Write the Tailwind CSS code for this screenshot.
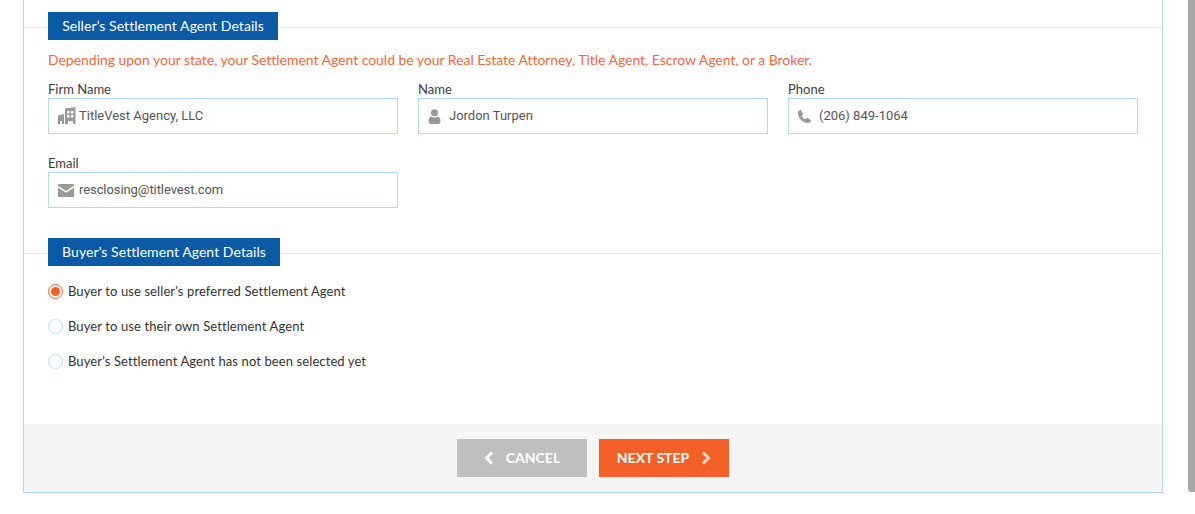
<!DOCTYPE html>
<html lang="en">
<head>
  <meta charset="UTF-8" />
  <title>Settlement Agent Details</title>
  <script src="https://cdn.jsdelivr.net/npm/@tailwindcss/browser@4"></script>
</head>
<body class="bg-white h-[514px] overflow-hidden font-['Lato',sans-serif] relative">

  <!-- scrollbar thumb -->
  <div class="absolute top-0 right-0 w-[7px] h-[492px] bg-[#a9a9a9] rounded-bl-[3px]"></div>

  <div class="ml-[23px] w-[1140px] h-[493px] border-x border-b border-[#b5d8ff] flex flex-col">

    <div class="flex-1 pt-[12px]">
      <!-- seller -->
      <div class="relative h-[28px]">
        <div class="absolute left-0 right-0 top-[15px] h-px bg-[#e6e8ea]"></div>
        <h2 class="absolute left-[24px] top-0 w-[230px] h-[28px] bg-[#0b5aa5] text-white text-[14px] leading-[28px] tracking-[0.06px] text-center">Seller’s Settlement Agent Details</h2>
      </div>

      <p class="ml-[24px] mt-[10px] text-[14px] leading-[20px] tracking-[-0.033px] text-[#f2683a]">Depending upon your state, your Settlement Agent could be your Real Estate Attorney, Title Agent, Escrow Agent, or a Broker.</p>

      <div class="ml-[24px] mt-[10px] grid grid-cols-[350px_350px_350px] gap-x-[20px] gap-y-[20px] w-[1090px]">
        <div>
          <label class="block text-[13px] leading-[18px] text-[#3c3c3c]">Firm Name</label>
          <div class="h-[36px] border border-[#b5d8ff] flex items-center pl-[9px] font-['Roboto',sans-serif] text-[13px] text-[#555]">
            <svg class="w-[18px] h-[18px] mr-[3px] shrink-0" viewBox="0 0 18 18" fill="#999"><path d="M0 8.500l6-1.500v10H4v-3H2v3H0z"/><path fill-rule="evenodd" d="M7 1.500 17.500 0v17h-2.500v-3h-5v3H7zM9 4v2.500h2.500V4zm4 0v2.500h2.500V4zM9 8v2.500h2.500V8zm4 0v2.500h2.500V8z"/></svg>
            <span>TitleVest Agency, LLC</span>
          </div>
        </div>
        <div>
          <label class="block text-[13px] leading-[18px] text-[#3c3c3c]">Name</label>
          <div class="h-[36px] border border-[#b5d8ff] flex items-center pl-[9px] font-['Roboto',sans-serif] text-[13px] text-[#555]">
            <svg class="w-[13px] h-[15px] mr-[8px] shrink-0" viewBox="0 0 13 15" fill="#999"><circle cx="6.500" cy="3.800" r="3.500"/><path d="M0.500 12c0-3 1.500-4.500 3-4.500 1 .7 2 1 3 1s2-.3 3-1c1.500 0 3 1.500 3 4.500 0 1.800-1 3-2.500 3H3c-1.500 0-2.500-1.200-2.500-3z"/></svg>
            <span>Jordon Turpen</span>
          </div>
        </div>
        <div>
          <label class="block text-[13px] leading-[18px] text-[#3c3c3c]">Phone</label>
          <div class="h-[36px] border border-[#b5d8ff] flex items-center pl-[9px] font-['Roboto',sans-serif] text-[13px] text-[#555]">
            <svg class="w-[13px] h-[13px] mr-[8px] shrink-0" viewBox="0 0 13 13" fill="#999"><path d="M3 .300 5 3.500c.2.400.1.800-.2 1.100L3.700 5.700c.8 1.600 2 2.800 3.600 3.600l1.100-1.100c.3-.3.700-.4 1.100-.2l3.200 2c.3.200.3.500.2.800-.5 1.300-1.500 2.200-2.900 2.200C4.800 13 0 8.200 0 3 0 1.600.9.600 2.200.1 2.500 0 2.800 0 3 .300z"/></svg>
            <span>(206) 849-1064</span>
          </div>
        </div>
        <div>
          <label class="block text-[13px] leading-[18px] text-[#3c3c3c]">Email</label>
          <div class="h-[36px] border border-[#b5d8ff] flex items-center pl-[9px] font-['Roboto',sans-serif] text-[13px] tracking-[-0.08px] text-[#555]">
            <svg class="w-[16px] h-[13px] mr-[5px] shrink-0" viewBox="0 0 16 13" fill="#999"><path d="M1 0h14c.6 0 1 .4 1 1v.8L8 7 0 1.800V1c0-.6.400-1 1-1z"/><path d="M0 3.500 8 8.700l8-5.200V12c0 .6-.4 1-1 1H1c-.6 0-1-.4-1-1z"/></svg>
            <span>resclosing@titlevest.com</span>
          </div>
        </div>
      </div>

      <!-- buyer -->
      <div class="relative h-[28px] mt-[30px]">
        <div class="absolute left-0 right-0 top-[15px] h-px bg-[#e6e8ea]"></div>
        <h2 class="absolute left-[24px] top-0 w-[232px] h-[28px] bg-[#0b5aa5] text-white text-[14px] leading-[28px] tracking-[0.06px] text-center">Buyer’s Settlement Agent Details</h2>
      </div>

      <div class="ml-[24px] mt-[15px] flex flex-col gap-[15px] text-[13px] leading-[20px] tracking-[0.1px] text-[#333]">
        <label class="flex items-center gap-[5px]">
          <span class="w-[15px] h-[15px] rounded-full border border-[#f26029] flex items-center justify-center"><span class="w-[9px] h-[9px] rounded-full bg-[#f26029]"></span></span>
          Buyer to use seller's preferred Settlement Agent
        </label>
        <label class="flex items-center gap-[5px]">
          <span class="w-[15px] h-[15px] rounded-full border border-[#b5d8ff]"></span>
          Buyer to use their own Settlement Agent
        </label>
        <label class="flex items-center gap-[5px]">
          <span class="w-[15px] h-[15px] rounded-full border border-[#b5d8ff]"></span>
          Buyer's Settlement Agent has not been selected yet
        </label>
      </div>
    </div>

    <div class="h-[68px] bg-[#f5f5f5] flex justify-center gap-[12px] pt-[15px] text-white text-[14px] font-bold">
      <button class="w-[130px] h-[38px] pb-[1px] bg-[#bfbfbf] flex items-center justify-center gap-[12px]">
        <svg class="w-[10px] h-[14px]" viewBox="0 0 10 14" fill="none" stroke="#fff" stroke-width="3"><path d="M8 1.500 2.500 7 8 12.500"/></svg>
        CANCEL
      </button>
      <button class="w-[130px] h-[38px] pb-[1px] bg-[#f36027] flex items-center justify-center gap-[12px]">
        NEXT STEP
        <svg class="w-[10px] h-[14px]" viewBox="0 0 10 14" fill="none" stroke="#fbd5c4" stroke-width="3"><path d="M2 1.500 7.500 7 2 12.500"/></svg>
      </button>
    </div>
  </div>
</body>
</html>
